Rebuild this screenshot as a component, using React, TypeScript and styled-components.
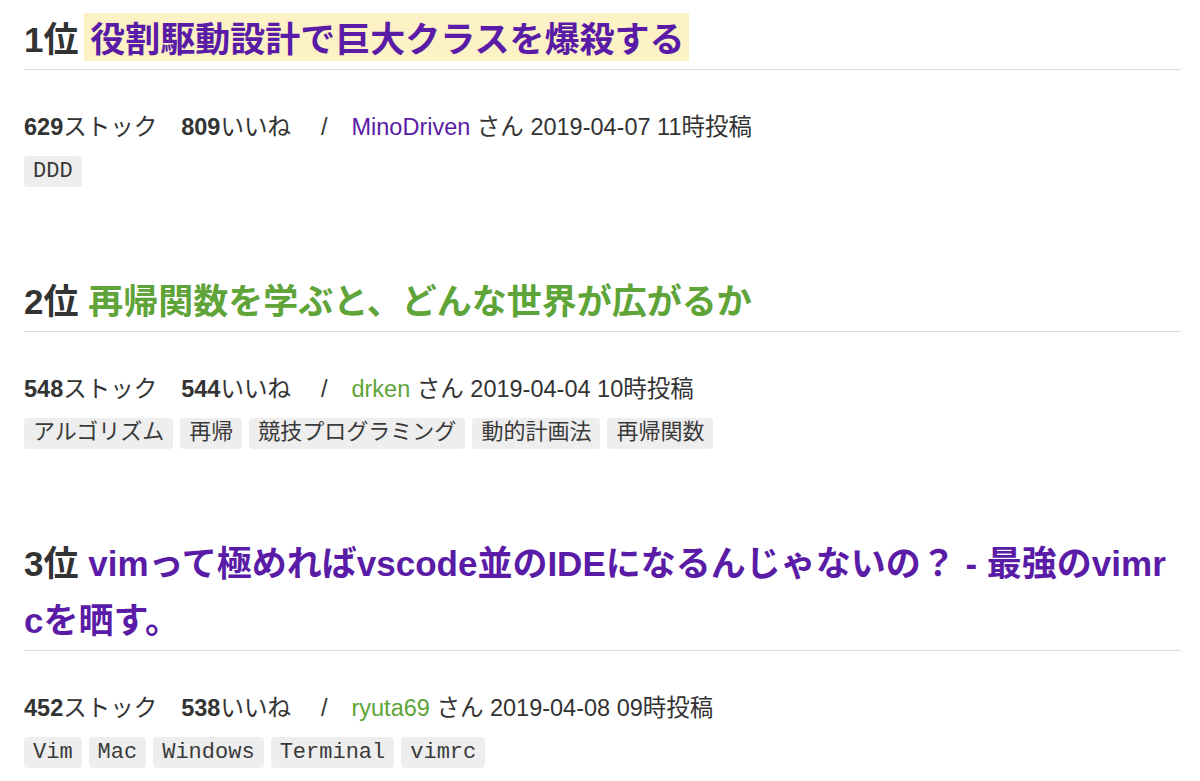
import styled, { createGlobalStyle } from 'styled-components';

const GlobalStyle = createGlobalStyle`
  body {
    margin: 0;
    background: #fff;
    color: #333;
    font-family: "Liberation Sans", "Noto Sans CJK JP", sans-serif;
  }
`;

type Color = 'purple' | 'green';

interface Article {
  rank: number;
  title: string;
  color: Color;
  highlighted?: boolean;
  stocks: number;
  likes: number;
  author: string;
  authorColor: Color;
  postedAt: string;
  tags: string[];
}

const COLORS: Record<Color, string> = {
  purple: '#5a1ca6',
  green: '#5ea438',
};

const articles: Article[] = [
  {
    rank: 1,
    title: '役割駆動設計で巨大クラスを爆殺する',
    color: 'purple',
    highlighted: true,
    stocks: 629,
    likes: 809,
    author: 'MinoDriven',
    authorColor: 'purple',
    postedAt: '2019-04-07 11時投稿',
    tags: ['DDD'],
  },
  {
    rank: 2,
    title: '再帰関数を学ぶと、どんな世界が広がるか',
    color: 'green',
    stocks: 548,
    likes: 544,
    author: 'drken',
    authorColor: 'green',
    postedAt: '2019-04-04 10時投稿',
    tags: ['アルゴリズム', '再帰', '競技プログラミング', '動的計画法', '再帰関数'],
  },
  {
    rank: 3,
    title: 'vimって極めればvscode並のIDEになるんじゃないの？ - 最強のvimrcを晒す。',
    color: 'purple',
    stocks: 452,
    likes: 538,
    author: 'ryuta69',
    authorColor: 'green',
    postedAt: '2019-04-08 09時投稿',
    tags: ['Vim', 'Mac', 'Windows', 'Terminal', 'vimrc'],
  },
];

const App = () => (
  <>
    <GlobalStyle />
    <Page>
      {articles.map((a) => (
        <Section key={a.rank}>
          <Heading>
            <Rank>{a.rank}位</Rank>{' '}
            <TitleLink href="#" $color={COLORS[a.color]} $highlighted={!!a.highlighted}>
              {a.title}
            </TitleLink>
          </Heading>
          <Meta>
            <Count>
              <b>{a.stocks}</b>ストック
            </Count>
            <Count>
              <b>{a.likes}</b>いいね
            </Count>
            <Slash>/</Slash>
            <Author $color={COLORS[a.authorColor]}>{a.author}</Author>
            <span> さん {a.postedAt}</span>
          </Meta>
          <TagList>
            {a.tags.map((t) => (
              <Tag key={t}>{t}</Tag>
            ))}
          </TagList>
        </Section>
      ))}
    </Page>
  </>
);

const Page = styled.main`
  display: flex;
  flex-direction: column;
  gap: 86px;
  padding: 11px 19px 0 24px;
`;

const Section = styled.section`
  display: flex;
  flex-direction: column;
`;

const Heading = styled.h2`
  margin: 0;
  padding-bottom: 1px;
  border-bottom: 1px solid #dddddd;
  font-size: 35px;
  line-height: 57px;
  font-weight: bold;
  word-break: break-all;
`;

const Rank = styled.span`
  color: #333;
`;

const TitleLink = styled.a<{ $color: string; $highlighted: boolean }>`
  color: ${({ $color }) => $color};
  text-decoration: none;
  ${({ $highlighted }) =>
    $highlighted &&
    `
    background: #fdf2c5;
    padding: 7px 4px 2px 6px;
    margin-left: -4px;
  `}
`;

const Meta = styled.div`
  margin-top: 40px;
  font-size: 23.5px;
  line-height: 34px;
  color: #333;
  white-space: nowrap;
`;

const Count = styled.span`
  margin-right: 24px;

  b {
    font-weight: bold;
  }
`;

const Slash = styled.span`
  margin: 0 24px 0 6px;
`;

const Author = styled.a.attrs({ href: '#' })<{ $color: string }>`
  color: ${({ $color }) => $color};
  text-decoration: none;
`;

const TagList = styled.div`
  display: flex;
  flex-wrap: wrap;
  gap: 7px;
  margin-top: 12px;
`;

const Tag = styled.span`
  display: inline-block;
  padding: 0 9px;
  border-radius: 4px;
  background: #eeeeee;
  color: #3a3a3a;
  font-family: "Liberation Mono", "Noto Sans CJK JP", monospace;
  font-size: 22px;
  line-height: 31px;
`;

export default App;
